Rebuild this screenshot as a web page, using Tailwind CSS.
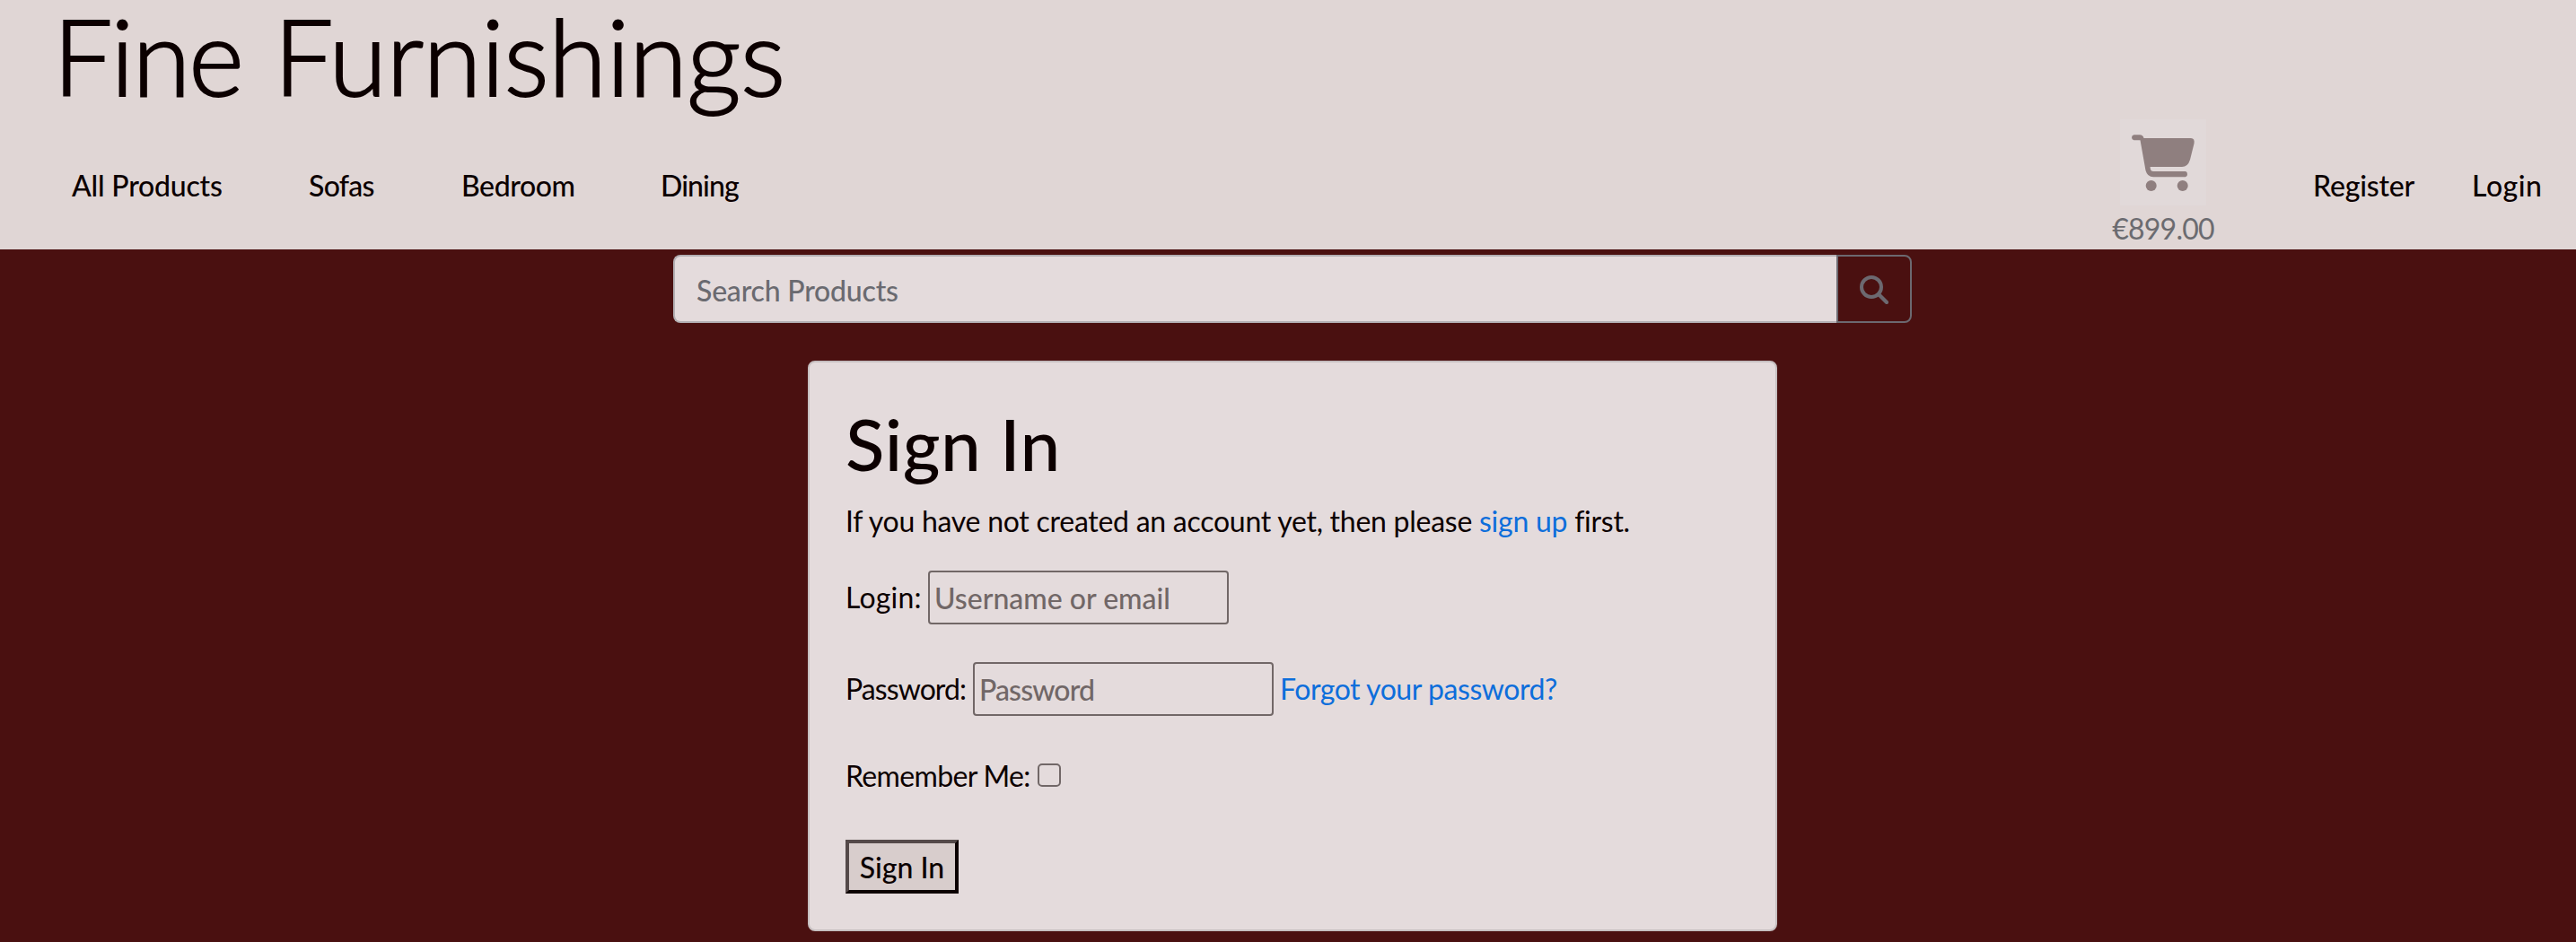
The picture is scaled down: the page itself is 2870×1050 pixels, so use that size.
<!DOCTYPE html>
<html lang="en">
<head>
<meta charset="utf-8">
<title>Fine Furnishings - Sign In</title>
<script src="https://cdn.jsdelivr.net/npm/@tailwindcss/browser@4"></script>
</head>
<body class="h-[1050px] overflow-hidden bg-[#4a1010] font-[Lato,sans-serif] text-[32px] leading-[48px] text-[#0c0000] whitespace-nowrap">
<header class="flex h-[278px] flex-col bg-[#e0d6d5]">
  <a class="block h-[124px] pl-[59px] text-[118px] leading-[124px] font-light tracking-[-0.6px] [-webkit-text-stroke:2px_#0c0000]"><span class="tracking-[-2px] [word-spacing:5px]">Fine </span>Furnishings</a>
  <nav class="flex items-start font-medium">
    <a class="mt-[59px] ml-[80px] w-[264px] tracking-[-0.21px]">All Products</a>
    <a class="mt-[59px] w-[170px] tracking-[-0.7px]">Sofas</a>
    <a class="mt-[59px] w-[222px] tracking-[-0.42px]">Bedroom</a>
    <a class="mt-[59px] tracking-[-0.88px]">Dining</a>
    <a class="mt-[9px] ml-auto flex w-[114px] flex-col items-center font-normal tracking-[-0.8px] text-[#6b6b70]">
      <svg class="mb-[2px] h-[96px] w-[96px] bg-[#e1d9d9]" viewBox="0 0 96 96" fill="none">
        <path d="M26.500 21H79Q83.500 21 82.500 27L78 45Q75.500 53 69 53H33.500L34 56Q34.500 58 37 58H73Q75 58.500 75 61.200T73 64.300H37Q30.500 64.300 28.500 57L22.500 23.200H15.500Q13 22.700 13 20.300T15.500 17.300H22Q25.500 17.300 26.500 21Z" fill="#8f7f7f"/>
        <circle cx="34.700" cy="74" r="6" fill="#8f7f7f"/><circle cx="69.700" cy="74" r="6" fill="#8f7f7f"/>
      </svg>
      <span>€899.00</span>
    </a>
    <a class="mt-[59px] ml-[110px] w-[177px] tracking-[-0.19px]">Register</a>
    <a class="mt-[59px] w-[116px] tracking-[0.5px]">Login</a>
  </nav>
</header>
<form class="mt-[6px] ml-[750px] flex h-[76px] w-[1380px]">
  <input type="text" placeholder="Search Products" class="min-w-0 flex-1 rounded-l-[8px] border-2 border-r-0 border-[#b3afb3] bg-[#e4dbdc] pt-[3px] pl-[24px] font-medium tracking-[-0.2px] placeholder:text-[#6a6a70]">
  <button type="button" class="flex w-[84px] items-center justify-center rounded-r-[8px] border-2 border-[#6c6970] pt-[2px]">
    <svg class="h-[32px] w-[32px]" viewBox="0 0 32 32" fill="none" stroke="#6c6970"><circle cx="13" cy="13" r="11" stroke-width="4"/><path d="M21 21L30 30" stroke-width="4.200" stroke-linecap="round"/></svg>
  </button>
</form>
<main class="mt-[42px] ml-[900px] flex h-[636px] w-[1080px] flex-col items-start rounded-[8px] border-2 border-[#c6bfc0] bg-[#e4dbdc] pl-[40px]">
  <h1 class="mt-[42px] h-[96px] text-[80px] leading-[96px] font-medium tracking-[0.5px]">Sign In</h1>
  <p class="mt-[15px] tracking-[-0.26px]">If you have not created an account yet, then please <a class="text-[#0d6edb]">sign up</a> first.</p>
  <div class="mt-[31px] flex h-[60px] items-center">
    <label class="w-[92px] tracking-[0.2px]">Login:</label>
    <input type="text" placeholder="Username or email" class="h-[60px] w-[335px] rounded-[4px] border-2 border-[#716767] pt-px pl-[5px] font-medium placeholder:text-[#716767]">
  </div>
  <div class="mt-[42px] flex h-[60px] items-center">
    <label class="w-[142px] tracking-[-0.92px]">Password:</label>
    <input type="text" placeholder="Password" class="h-[60px] w-[335px] rounded-[4px] border-2 border-[#716767] pt-px pl-[5px] font-medium tracking-[-0.86px] placeholder:text-[#716767]">
    <a class="ml-[7px] tracking-[-0.45px] text-[#0d6edb]">Forgot your password?</a>
  </div>
  <div class="mt-[43px] flex h-[48px] items-center">
    <label class="w-[214px] tracking-[-0.66px]">Remember Me:</label>
    <input type="checkbox" class="mb-[2px] h-[26px] w-[26px] appearance-none rounded-[5px] border-2 border-[#716767]">
  </div>
  <button type="button" class="mt-[47px] h-[60px] w-[126px] border-4 border-t-[#544949] border-l-[#544949] border-r-[#0c0000] border-b-[#0c0000] bg-[#d8cdcc] pt-[2px] leading-[48px] font-medium">Sign In</button>
</main>
</body>
</html>
